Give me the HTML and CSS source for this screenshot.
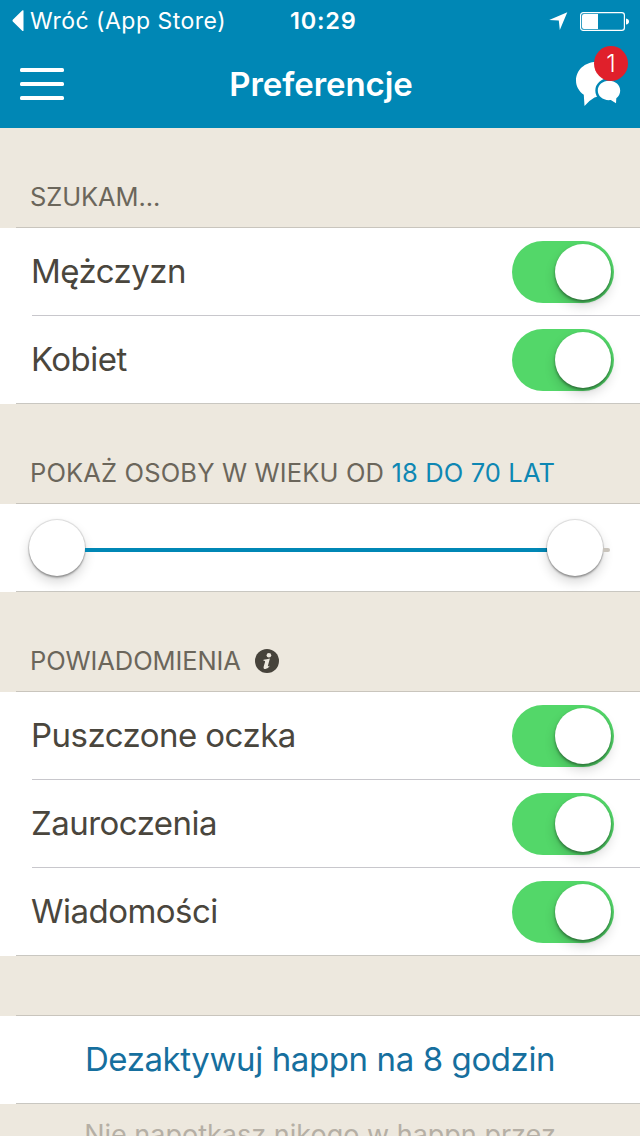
FILE: index.html
```
<!DOCTYPE html>
<html lang="pl">
<head>
<meta charset="utf-8">
<title>Preferencje</title>
<link rel="stylesheet" href="styles.css">
</head>
<body>
<div class="screen">
  <header class="top">
    <div class="status">
      <div class="back">
        <svg width="12" height="22" viewBox="0 0 12 22"><path d="M11.5.5v20.200q-.6.8-1.300 0L.8 11.400q-.6-.8 0-1.600L10.200.6q.7-.8 1.300-.1z" fill="#fff"/></svg>
        <span class="back-label">Wróć (App Store)</span>
      </div>
      <span class="clock">10:29</span>
      <div class="indicators">
        <svg width="19" height="19" viewBox="0 0 19 19"><path d="M18.300.3 10.800 18 9.800 8.600.2 7.900z" fill="#fff"/></svg>
        <svg width="49" height="19" viewBox="0 0 49 19"><rect x=".6" y=".6" width="43.800" height="17.800" rx="2.600" fill="none" stroke="#fff" stroke-width="1.200"/><path d="M2 4q0-2 2-2h14v15H4q-2 0-2-2z" fill="#fff"/><path d="M46 6.500q3 .5 3 3t-3 3z" fill="#fff"/></svg>
      </div>
    </div>
    <nav class="navbar">
      <svg width="44" height="32" viewBox="0 0 44 32"><g fill="#fff"><rect width="44" height="4" rx="1.600"/><rect y="14" width="44" height="4" rx="1.600"/><rect y="28" width="44" height="4" rx="1.600"/></g></svg>
      <h1 class="title">Preferencje</h1>
      <div class="chat">
        <svg width="46" height="46" viewBox="0 0 46 46"><path d="M20 0C9 0 0 8 0 18.500c0 6 3 10.800 7.800 14.300L8.500 44q4.500-5.500 10-8.500l10-3V4Q25 0 20 0z" fill="#fff"/><path d="M33 18.800c6.400 0 11.200 4.200 11.200 9.800 0 3.300-1.500 5.900-3.900 7.700l-.3 5-5.200-3.200c-7.600.8-13-3.500-13-9.500 0-5.600 4.800-9.800 11.200-9.800z" fill="#fff" stroke="#0087b5" stroke-width="5" paint-order="stroke"/></svg>
        <span class="badge">1</span>
      </div>
    </nav>
  </header>

  <h2 class="section-head"><span class="head-seek">SZUKAM...</span></h2>
  <section class="group">
    <div class="row"><span class="label">Mężczyzn</span><span class="switch"></span></div>
    <div class="row"><span class="label">Kobiet</span><span class="switch"></span></div>
  </section>

  <h2 class="section-head"><span class="head-age">POKAŻ OSOBY W WIEKU OD <span class="accent">18 DO 70 LAT</span></span></h2>
  <section class="group">
    <div class="row slider"><span class="knob"></span><span class="track"></span><span class="knob"></span><span class="rest"></span></div>
  </section>

  <h2 class="section-head notifications"><span class="head-notif">POWIADOMIENIA</span>
    <svg class="info" width="24" height="24" viewBox="0 0 24 24"><circle cx="12" cy="12" r="12" fill="#47433b"/><circle cx="13.900" cy="6.200" r="2.300" fill="#ede8de"/><path d="M8.600 10.800q3-.4 6.300-1.200l-2 7.200q-.3 1.200 2.200-.4-2.200 3.600-4.700 3.600-2.400 0-1.700-2.600l1.400-4.700q.3-1.100-1.700-.9z" fill="#ede8de"/></svg>
  </h2>
  <section class="group">
    <div class="row"><span class="label">Puszczone oczka</span><span class="switch"></span></div>
    <div class="row"><span class="label">Zauroczenia</span><span class="switch"></span></div>
    <div class="row"><span class="label">Wiadomości</span><span class="switch"></span></div>
  </section>

  <div class="section-head spacer"></div>
  <section class="group">
    <div class="row action"><span class="action-label">Dezaktywuj happn na 8 godzin</span></div>
  </section>
  <p class="note">Nie napotkasz nikogo w happn przez</p>
</div>
</body>
</html>
```
FILE: styles.css
```
* { box-sizing: border-box; }
body { margin: 0; font-family: Inter, "Liberation Sans", sans-serif; }
h1, h2, p { margin: 0; font-weight: 400; }
svg { display: block; flex: none; }
span { white-space: nowrap; }
.screen { width: 640px; height: 1136px; overflow: hidden; background: #ede8de; color: #4a463d; }
.top { height: 128px; background: #0087b5; color: #fff; }
.status { height: 40px; display: grid; grid-template-columns: 290px 1fr 91px; align-items: center; }
.back { display: flex; align-items: center; gap: 6px; padding-left: 12px; height: 38px; }
.back-label { font-size: 23px; line-height: 38px; letter-spacing: 0.5px; }
.clock { font-size: 23.5px; font-weight: 600; line-height: 42px; letter-spacing: 0.8px; }
.indicators { display: flex; gap: 12px; }
.navbar { height: 88px; display: grid; grid-template-columns: 1fr auto 1fr; align-items: center; padding: 0 17px 0 20px; }
.title { font-size: 33px; font-weight: 600; line-height: 88px; letter-spacing: -0.05px; margin-right: 1px; }
.chat { position: relative; width: 46px; height: 46px; justify-self: end; margin: 2px 1px 0 0; }
.badge { position: absolute; left: 18px; top: -16px; width: 34px; height: 35px; border-radius: 50%; background: #e0202b; font-size: 24px; font-weight: 300; line-height: 36px; text-align: center; }
.section-head { height: 100px; padding: 54px 0 0 30px; font-size: 25.5px; line-height: 30px; color: #6b665b; background: linear-gradient(#c9c5bd, #c9c5bd) 16px 99px / 624px 1px no-repeat; }
.head-seek, .head-notif { letter-spacing: -0.1px; }
.head-age { letter-spacing: 0.14px; }
.accent { color: #0e87b3; }
.notifications { display: flex; gap: 14px; }
.info { margin-top: 3px; }
.spacer { height: 60px; background-position: 16px 59px; }
.group { background: #fff; }
.row { height: 88px; padding: 0 26px 0 31px; display: flex; align-items: center; justify-content: space-between; background: linear-gradient(#c8c7cc, #c8c7cc) 32px 87px / 608px 1px no-repeat; }
.row:last-child { background: linear-gradient(#c9c7c1, #c9c7c1) 16px 87px / 624px 1px no-repeat; }
.label { font-size: 33px; line-height: 86px; height: 88px; letter-spacing: -0.53px; }
.switch { width: 102px; height: 62px; border-radius: 31px; background: #53d769; display: flex; justify-content: flex-end; padding: 3px; }
.switch::after { content: ""; width: 56px; height: 56px; border-radius: 50%; background: #fff; box-shadow: 0 2px 3px rgba(0,0,0,.4), 0 6px 12px rgba(0,0,0,.16); }
.slider { padding: 0 30px 0 29px; justify-content: flex-start; }
.knob { width: 56px; height: 56px; flex: none; border-radius: 50%; background: #fff; box-shadow: 0 0 1px 1px rgba(0,0,0,.13), 0 2px 2px rgba(0,0,0,.25), 0 6px 12px rgba(0,0,0,.16); }
.track { flex: 1; height: 4px; margin-top: 4px; background: #0087b5; }
.rest { width: 7px; height: 4px; margin-top: 4px; border-radius: 0 2px 2px 0; background: #c9c4bc; }
.action { justify-content: center; padding: 0; color: #166f9e; }
.action-label { font-size: 33px; line-height: 86px; height: 88px; letter-spacing: -0.4px; }
.note { padding-top: 14px; text-align: center; font-size: 27px; line-height: 34px; color: #b5afa5; white-space: nowrap; }
```
